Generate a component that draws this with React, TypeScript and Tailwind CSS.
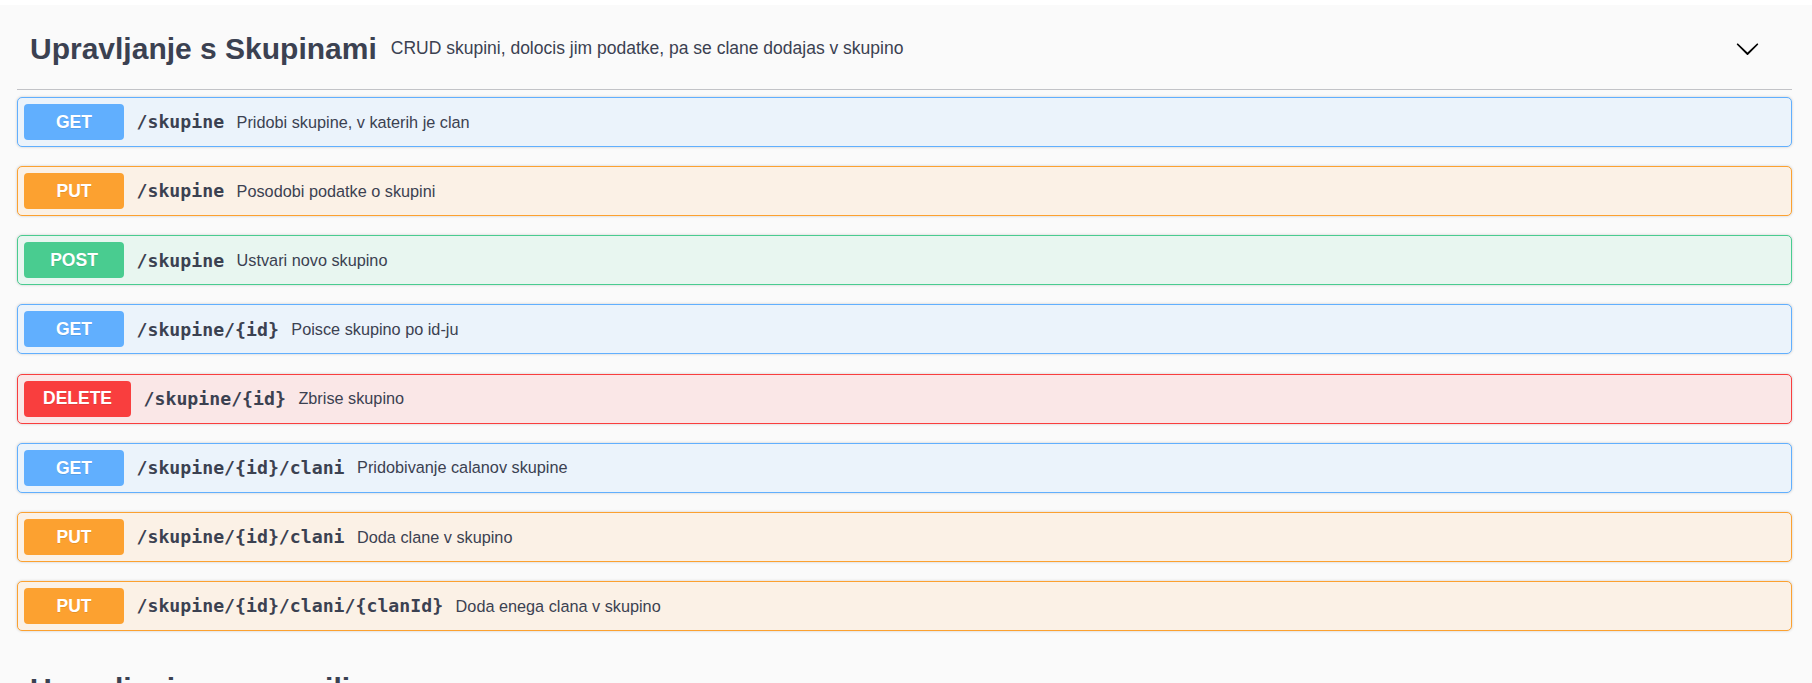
import type { ReactNode } from 'react';

type Method = 'GET' | 'PUT' | 'POST' | 'DELETE';

const methodStyles: Record<Method, { row: string; badge: string }> = {
  GET: { row: 'border-[#61affe] bg-[#ebf3fb]', badge: 'bg-[#61affe]' },
  PUT: { row: 'border-[#fca130] bg-[#fbf1e6]', badge: 'bg-[#fca130]' },
  POST: { row: 'border-[#49cc90] bg-[#e8f6f0]', badge: 'bg-[#49cc90]' },
  DELETE: { row: 'border-[#f93e3e] bg-[#fae7e7]', badge: 'bg-[#f93e3e]' },
};

const ops: { method: Method; path: string; summary: string }[] = [
  { method: 'GET', path: '/skupine', summary: 'Pridobi skupine, v katerih je clan' },
  { method: 'PUT', path: '/skupine', summary: 'Posodobi podatke o skupini' },
  { method: 'POST', path: '/skupine', summary: 'Ustvari novo skupino' },
  { method: 'GET', path: '/skupine/{id}', summary: 'Poisce skupino po id-ju' },
  { method: 'DELETE', path: '/skupine/{id}', summary: 'Zbrise skupino' },
  { method: 'GET', path: '/skupine/{id}/clani', summary: 'Pridobivanje calanov skupine' },
  { method: 'PUT', path: '/skupine/{id}/clani', summary: 'Doda clane v skupino' },
  { method: 'PUT', path: '/skupine/{id}/clani/{clanId}', summary: 'Doda enega clana v skupino' },
];

const Chevron = () => (
  <svg width="25" height="25" viewBox="0 0 20 20" className="fill-[#000]">
    <path d="M17.418 6.109c.272-.268.709-.268.979 0s.271.701 0 .969l-7.908 7.83c-.27.268-.707.268-.979 0l-7.908-7.83c-.27-.268-.27-.701 0-.969.271-.268.709-.268.979 0L10 13.25l7.418-7.141z" />
  </svg>
);

const TagHeader = ({ title, children }: { title: string; children?: ReactNode }) => (
  <div className="mt-[5px] flex h-[85px] items-center border-b border-[#c2c3c7] pt-[2px] pl-[13px] pr-[32px]">
    <h3 className="text-[30px] font-bold leading-normal">{title}</h3>
    {children && <small className="ml-[14px] text-[17.5px]">{children}</small>}
    <button className="ml-auto flex items-center">
      <Chevron />
    </button>
  </div>
);

const OpRow = ({ method, path, summary }: { method: Method; path: string; summary: string }) => {
  const s = methodStyles[method];
  return (
    <div className={`flex h-[50px] items-center rounded-[5px] border p-[6px] shadow-[0_0_3px_rgba(0,0,0,0.19)] ${s.row}`}>
      <span className={`flex h-[36px] min-w-[100px] items-center justify-center rounded-[4px] px-[19px] text-[17.5px] font-bold text-white [text-shadow:0_1px_0_rgba(0,0,0,0.1)] ${s.badge}`}>
        {method}
      </span>
      <span className="px-[12.5px] font-['DejaVu_Sans_Mono',monospace] text-[18.2px] font-bold">{path}</span>
      <span className="text-[16.25px]">{summary}</span>
    </div>
  );
};

export default function App() {
  return (
    <div className="min-h-screen bg-[#fafafa] pl-[17px] pr-[20px] font-['Liberation_Sans',Arial,sans-serif] text-[#3b4151]">
      <section>
        <TagHeader title="Upravljanje s Skupinami">
          CRUD skupini, dolocis jim podatke, pa se clane dodajas v skupino
        </TagHeader>
        <div className="mt-[7px] flex flex-col gap-[19.14px]">
          {ops.map((op, i) => (
            <OpRow key={i} {...op} />
          ))}
        </div>
      </section>
      <section className="mt-[15px]">
        <TagHeader title="Upravljanje s sporocili" />
      </section>
    </div>
  );
}
